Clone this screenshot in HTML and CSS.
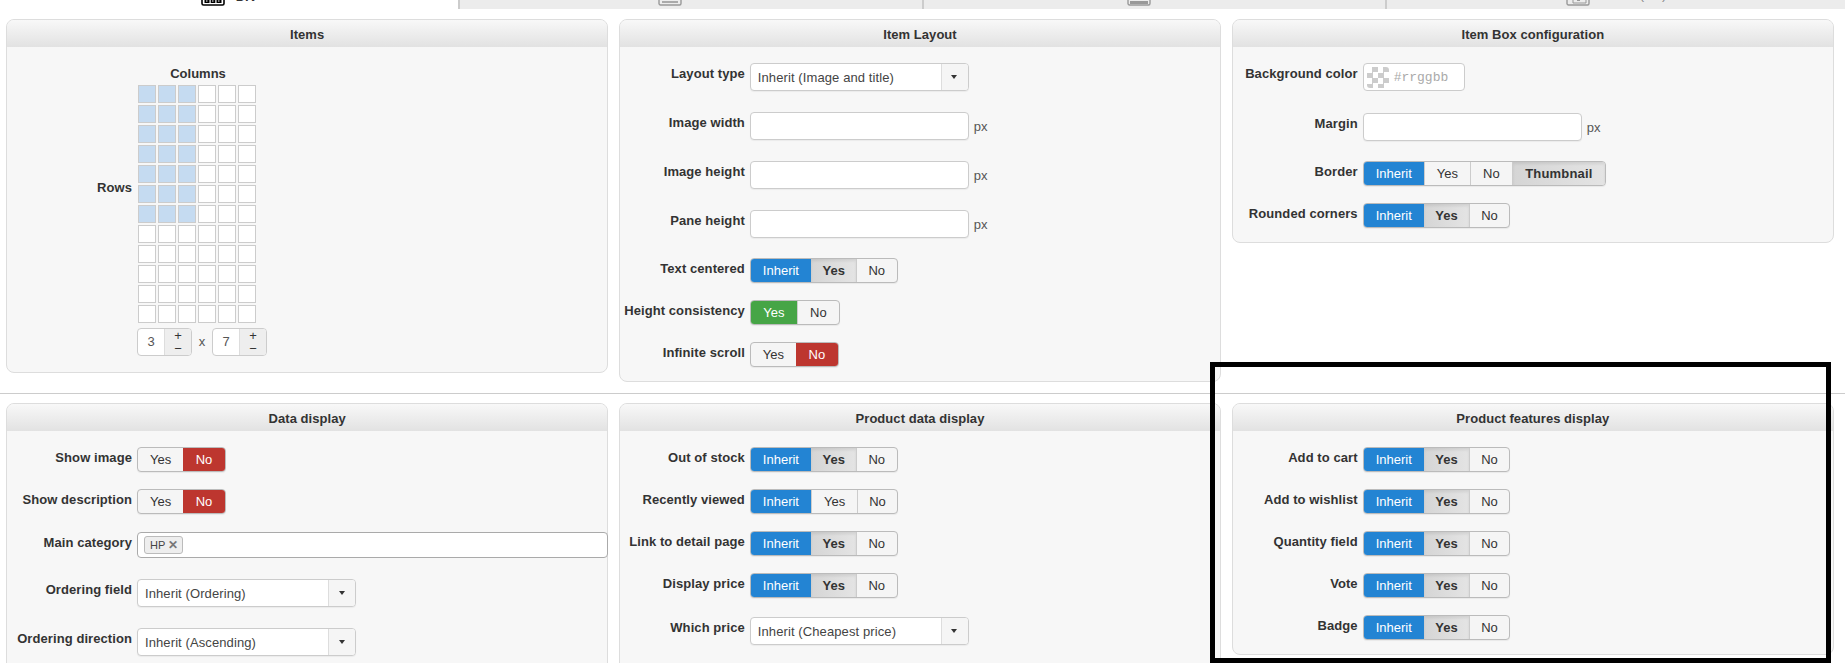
FILE: index.html
```html
<!DOCTYPE html>
<html lang="en">
<head>
<meta charset="utf-8">
<title>Items configuration</title>
<link rel="stylesheet" href="styles.css">
</head>
<body>
<nav class="tabs">
  <a class="tab tab-active">
    <svg class="tab-icon" viewBox="0 0 24 18" width="24" height="18"><rect x="1" y="1" width="22" height="16" rx="1.5" fill="#fff" stroke="#000" stroke-width="1.6"/><path d="M3.5 3h5v12h-5zM9.7 3h4.6v12H9.7zM15.5 3h5v12h-5z" fill="#000"/><path d="M5 12.5h1.5v1H5zM11 12.5h1.5v1H11zM17 12.5h1.5v1H17z" fill="#fff"/></svg>
    <span class="tab-text">DIV</span>
  </a>
  <a class="tab"><svg class="tab-icon" viewBox="0 0 24 18" width="24" height="18"><rect x="1" y="1" width="22" height="16" rx="1.5" fill="none" stroke="#999" stroke-width="1.4"/><path d="M4 14h16" stroke="#aaa" stroke-width="2"/></svg><span class="tab-text tab-text-muted">Table</span></a>
  <a class="tab"><svg class="tab-icon" viewBox="0 0 24 18" width="24" height="18"><rect x="1" y="1" width="22" height="16" rx="1.5" fill="none" stroke="#999" stroke-width="1.4"/><path d="M3 14.5h18" stroke="#999" stroke-width="3"/></svg><span class="tab-text tab-text-muted">List</span></a>
  <a class="tab tab-wide"><svg class="tab-icon" viewBox="0 0 24 18" width="24" height="18"><rect x="1" y="1" width="22" height="16" rx="1.5" fill="none" stroke="#999" stroke-width="1.4"/><path d="M7 5h13v10H7zM11 12.5h3" fill="none" stroke="#999"/></svg><span class="tab-text tab-text-muted">Scroll (tab)</span></a>
</nav>

<main>
  <section class="panel-row">
    <article class="panel">
      <h3 class="panel-title">Items</h3>
      <div class="panel-body grid-editor">
        <div class="label rows-label">Rows</div>
        <div class="grid-wrap">
          <div class="columns-label">Columns</div>
          <div class="cells" id="cells">
            <i class="on"></i><i class="on"></i><i class="on"></i><i></i><i></i><i></i>
            <i class="on"></i><i class="on"></i><i class="on"></i><i></i><i></i><i></i>
            <i class="on"></i><i class="on"></i><i class="on"></i><i></i><i></i><i></i>
            <i class="on"></i><i class="on"></i><i class="on"></i><i></i><i></i><i></i>
            <i class="on"></i><i class="on"></i><i class="on"></i><i></i><i></i><i></i>
            <i class="on"></i><i class="on"></i><i class="on"></i><i></i><i></i><i></i>
            <i class="on"></i><i class="on"></i><i class="on"></i><i></i><i></i><i></i>
            <i></i><i></i><i></i><i></i><i></i><i></i>
            <i></i><i></i><i></i><i></i><i></i><i></i>
            <i></i><i></i><i></i><i></i><i></i><i></i>
            <i></i><i></i><i></i><i></i><i></i><i></i>
            <i></i><i></i><i></i><i></i><i></i><i></i>
          </div>
          <div class="steppers">
            <div class="stepper"><span class="stepper-value">3</span><span class="stepper-btns"><b>+</b><b>−</b></span></div>
            <span class="times">x</span>
            <div class="stepper"><span class="stepper-value">7</span><span class="stepper-btns"><b>+</b><b>−</b></span></div>
          </div>
        </div>
      </div>
    </article>

    <article class="panel">
      <h3 class="panel-title">Item Layout</h3>
      <div class="panel-body">
        <div class="row gap-21"><label class="label">Layout type</label><div class="select"><span class="select-text">Inherit (Image and title)</span><span class="select-arrow"></span></div></div>
        <div class="row gap-21"><label class="label">Image width</label><div class="input"></div><span class="unit">px</span></div>
        <div class="row gap-21"><label class="label">Image height</label><div class="input"></div><span class="unit">px</span></div>
        <div class="row gap-20"><label class="label">Pane height</label><div class="input"></div><span class="unit">px</span></div>
        <div class="row gap-17"><label class="label">Text centered</label><div class="toggle"><span class="btn blue">Inherit</span><span class="btn soft">Yes</span><span class="btn">No</span></div></div>
        <div class="row gap-17"><label class="label">Height consistency</label><div class="toggle"><span class="btn green">Yes</span><span class="btn">No</span></div></div>
        <div class="row"><label class="label">Infinite scroll</label><div class="toggle"><span class="btn">Yes</span><span class="btn red">No</span></div></div>
      </div>
    </article>

    <article class="panel">
      <h3 class="panel-title">Item Box configuration</h3>
      <div class="panel-body">
        <div class="row gap-22"><label class="label">Background color</label><div class="color"><span class="swatch"></span><span class="color-text">#rrggbb</span></div></div>
        <div class="row gap-20"><label class="label">Margin</label><div class="input"></div><span class="unit">px</span></div>
        <div class="row gap-17"><label class="label">Border</label><div class="toggle"><span class="btn blue">Inherit</span><span class="btn">Yes</span><span class="btn">No</span><span class="btn soft btn-wide">Thumbnail</span></div></div>
        <div class="row"><label class="label">Rounded corners</label><div class="toggle"><span class="btn blue">Inherit</span><span class="btn soft">Yes</span><span class="btn">No</span></div></div>
      </div>
    </article>
  </section>

  <hr class="divider">

  <section class="panel-row">
    <article class="panel">
      <h3 class="panel-title">Data display</h3>
      <div class="panel-body">
        <div class="row gap-17"><label class="label">Show image</label><div class="toggle"><span class="btn">Yes</span><span class="btn red">No</span></div></div>
        <div class="row gap-18"><label class="label">Show description</label><div class="toggle"><span class="btn">Yes</span><span class="btn red">No</span></div></div>
        <div class="row gap-21"><label class="label">Main category</label><div class="tags"><span class="tag">HP <span class="tag-x">✕</span></span></div></div>
        <div class="row gap-21"><label class="label">Ordering field</label><div class="select"><span class="select-text">Inherit (Ordering)</span><span class="select-arrow"></span></div></div>
        <div class="row"><label class="label">Ordering direction</label><div class="select"><span class="select-text">Inherit (Ascending)</span><span class="select-arrow"></span></div></div>
      </div>
    </article>

    <article class="panel">
      <h3 class="panel-title">Product data display</h3>
      <div class="panel-body body-continues">
        <div class="row gap-17"><label class="label">Out of stock</label><div class="toggle"><span class="btn blue">Inherit</span><span class="btn soft">Yes</span><span class="btn">No</span></div></div>
        <div class="row gap-17"><label class="label">Recently viewed</label><div class="toggle"><span class="btn blue">Inherit</span><span class="btn">Yes</span><span class="btn">No</span></div></div>
        <div class="row gap-17"><label class="label">Link to detail page</label><div class="toggle"><span class="btn blue">Inherit</span><span class="btn soft">Yes</span><span class="btn">No</span></div></div>
        <div class="row gap-19"><label class="label">Display price</label><div class="toggle"><span class="btn blue">Inherit</span><span class="btn soft">Yes</span><span class="btn">No</span></div></div>
        <div class="row"><label class="label">Which price</label><div class="select"><span class="select-text">Inherit (Cheapest price)</span><span class="select-arrow"></span></div></div>
      </div>
    </article>

    <article class="panel">
      <h3 class="panel-title">Product features display</h3>
      <div class="panel-body">
        <div class="row gap-17"><label class="label">Add to cart</label><div class="toggle"><span class="btn blue">Inherit</span><span class="btn soft">Yes</span><span class="btn">No</span></div></div>
        <div class="row gap-17"><label class="label">Add to wishlist</label><div class="toggle"><span class="btn blue">Inherit</span><span class="btn soft">Yes</span><span class="btn">No</span></div></div>
        <div class="row gap-17"><label class="label">Quantity field</label><div class="toggle"><span class="btn blue">Inherit</span><span class="btn soft">Yes</span><span class="btn">No</span></div></div>
        <div class="row gap-17"><label class="label">Vote</label><div class="toggle"><span class="btn blue">Inherit</span><span class="btn soft">Yes</span><span class="btn">No</span></div></div>
        <div class="row"><label class="label">Badge</label><div class="toggle"><span class="btn blue">Inherit</span><span class="btn soft">Yes</span><span class="btn">No</span></div></div>
      </div>
    </article>
  </section>
</main>

<div class="highlight"></div>
</body>
</html>
```
FILE: styles.css
```css
* { box-sizing: border-box; }

html, body {
  margin: 0;
  height: 663px;
  overflow: hidden;
  background: #fff;
}

body {
  position: relative;
  font-family: "Liberation Sans", Arial, sans-serif;
  font-size: 13px;
  line-height: 18px;
  color: #333;
}

/* Tabs, cut off by the top of the picture */
.tabs {
  display: grid;
  grid-template-columns: 458px 464px 463px 1fr;
  height: 9px;
}

.tab {
  display: flex;
  justify-content: center;
  align-items: flex-end;
  gap: 11px;
  height: 9px;
  background: #ececec;
  border-left: 2px solid #ccc;
  padding-bottom: 3px;
}

.tab-active {
  background: #fff;
  border-left: 0;
}

.tab-wide { gap: 14px; }

.tab-icon { flex: none; }

.tab-text {
  font-weight: bold;
  font-size: 13px;
  line-height: 18px;
  color: #333;
}

.tab-text-muted {
  color: #888;
  font-weight: normal;
  transform: translateY(-2px);
}

/* Panels */
.panel-row {
  display: grid;
  grid-template-columns: repeat(3, 1fr);
  column-gap: 10.5px;
  align-items: start;
  margin: 10px 11px 0 6px;
}

.divider + .panel-row { margin-top: 9px; }

.panel {
  background: #f7f7f7;
  border: 1px solid #ddd;
  border-radius: 8px;
}

.panel-title {
  margin: 0;
  height: 27px;
  font-size: 13px;
  line-height: 29px;
  letter-spacing: .05px;
  font-weight: bold;
  text-align: center;
  color: #333;
  border-radius: 7px 7px 0 0;
  background: linear-gradient(#f8f8f8, #e2e2e2);
}

.panel-body {
  padding: 16px 0 14px;
}

.body-continues { padding-bottom: 40px; }

.divider {
  height: 1px;
  margin: 11px 0 0;
  border: 0;
  background: #ccc;
}

.row {
  display: flex;
  align-items: flex-start;
}

.gap-17 { margin-bottom: 17px; }
.gap-18 { margin-bottom: 18px; }
.gap-19 { margin-bottom: 19px; }
.gap-20 { margin-bottom: 20px; }
.gap-21 { margin-bottom: 21px; }
.gap-22 { margin-bottom: 22px; }

.label {
  flex: none;
  width: 125px;
  margin-right: 5px;
  padding-top: 2px;
  font-weight: bold;
  letter-spacing: .08px;
  text-align: right;
  white-space: nowrap;
  color: #333;
}

/* Toggle groups */
.toggle {
  display: inline-flex;
  height: 25px;
  border: 1px solid #bbb;
  border-radius: 4px;
  background: #f5f5f5;
  overflow: hidden;
  box-shadow: 0 1px 1px rgba(0, 0, 0, .06);
}

.btn {
  display: block;
  padding: 0 12px;
  line-height: 23px;
  border-left: 1px solid #ccc;
  color: #333;
  white-space: nowrap;
}

.btn:first-child { border-left: 0; }

.btn:last-child { padding: 0 11.5px 0 11px; }

.btn.blue { background: #2384d3; color: #fff; margin: -1px 0; padding-top: 1px; padding-bottom: 1px; }
.btn.green { background: #46a546; color: #fff; margin: -1px 0; padding: 1px 12.5px; }
.btn.red { background: #bd362f; color: #fff; border-left: 0; margin: -1px 0; padding: 1px 12.5px; }
.btn.soft {
  padding: 0 11.5px;
  background: linear-gradient(to right, #d5d5d5, #e4e4e4);
  box-shadow: inset 0 2px 3px rgba(0, 0, 0, .08);
  font-weight: bold;
  border-left: 0;
}

.green + .btn { padding: 0 12px; }

.btn.btn-wide {
  padding: 0 12.5px;
  letter-spacing: .2px;
  border-left: 1px solid #ccc;
}

/* Selects and inputs */
.select,
.input {
  width: 219px;
  height: 28px;
  background: #fff;
  border: 1px solid #ccc;
  border-radius: 4px;
  box-shadow: 0 1px 1px rgba(0, 0, 0, .05);
}

.select {
  display: flex;
  overflow: hidden;
}

.select-text {
  flex: 1;
  padding-left: 7px;
  line-height: 28px;
  letter-spacing: .1px;
  color: #444;
}

.select-arrow {
  position: relative;
  flex: none;
  width: 27px;
  background: #f5f5f5;
  border-left: 1px solid #ddd;
}

.select-arrow::after {
  content: "";
  position: absolute;
  left: 9.5px;
  top: 11px;
  border: 3.5px solid transparent;
  border-top: 4px solid #333;
  border-bottom: 0;
}

.unit {
  height: 28px;
  margin-left: 5px;
  line-height: 30px;
  color: #555;
}

.color {
  display: flex;
  align-items: center;
  width: 102px;
  height: 28px;
  padding: 0 3px;
  background: #fff;
  border: 1px solid #ccc;
  border-radius: 4px;
}

.swatch {
  flex: none;
  width: 22px;
  height: 21px;
  border-radius: 3px;
  background: repeating-conic-gradient(#ccc 0 25%, #fff 0 50%) 0 0 / 11px 11px;
}

.color-text {
  margin: 1px 0 0 5px;
  font-family: "Liberation Mono", monospace;
  font-size: 13px;
  color: #aaa;
}

.tags {
  flex: 1;
  display: flex;
  align-items: center;
  height: 26px;
  padding-left: 6px;
  background: #fff;
  border: 1px solid #aaa;
  border-radius: 4px;
  margin-right: -1px;
}

.tag {
  display: block;
  height: 18px;
  padding: 0 4px 0 5px;
  font-size: 11px;
  line-height: 17px;
  background: #eee;
  border: 1px solid #bbb;
  border-radius: 3px;
  color: #444;
}

.tag-x { color: #777; font-size: 12px; font-weight: bold; }

/* Items grid */
.grid-editor {
  display: flex;
  align-items: flex-start;
  padding-bottom: 16px;
}

.rows-label { margin-top: 114px; }

.grid-wrap { width: 140px; }

.columns-label {
  width: 122px;
  height: 21px;
  font-weight: bold;
  text-align: center;
  line-height: 21px;
}

.cells {
  display: grid;
  grid-template-columns: repeat(6, 20px);
  grid-auto-rows: 20px;
  width: 120px;
}

.cells i {
  display: block;
  margin: 1px;
  background: #fff;
  border: 1px solid #ccc;
}

.cells i.on { background: #c5dbf1; }

.steppers {
  display: flex;
  align-items: center;
  margin-top: 4px;
}

.stepper {
  display: flex;
  width: 55px;
  height: 28px;
  border: 1px solid #ccc;
  border-radius: 4px;
  background: #fff;
  overflow: hidden;
}

.stepper-value {
  flex: 1;
  text-align: center;
  line-height: 26px;
  color: #555;
}

.stepper-btns {
  display: flex;
  flex-direction: column;
  width: 27px;
  background: #eee;
  border-left: 1px solid #ddd;
}

.stepper-btns b {
  height: 13px;
  font-weight: normal;
  text-align: center;
  line-height: 13px;
  color: #333;
}

.times {
  width: 20px;
  text-align: center;
  color: #555;
}

/* Black frame drawn over the screenshot */
.highlight {
  position: absolute;
  left: 1210px;
  top: 362px;
  width: 621px;
  height: 301px;
  border: 5px solid #000;
  pointer-events: none;
}
```
